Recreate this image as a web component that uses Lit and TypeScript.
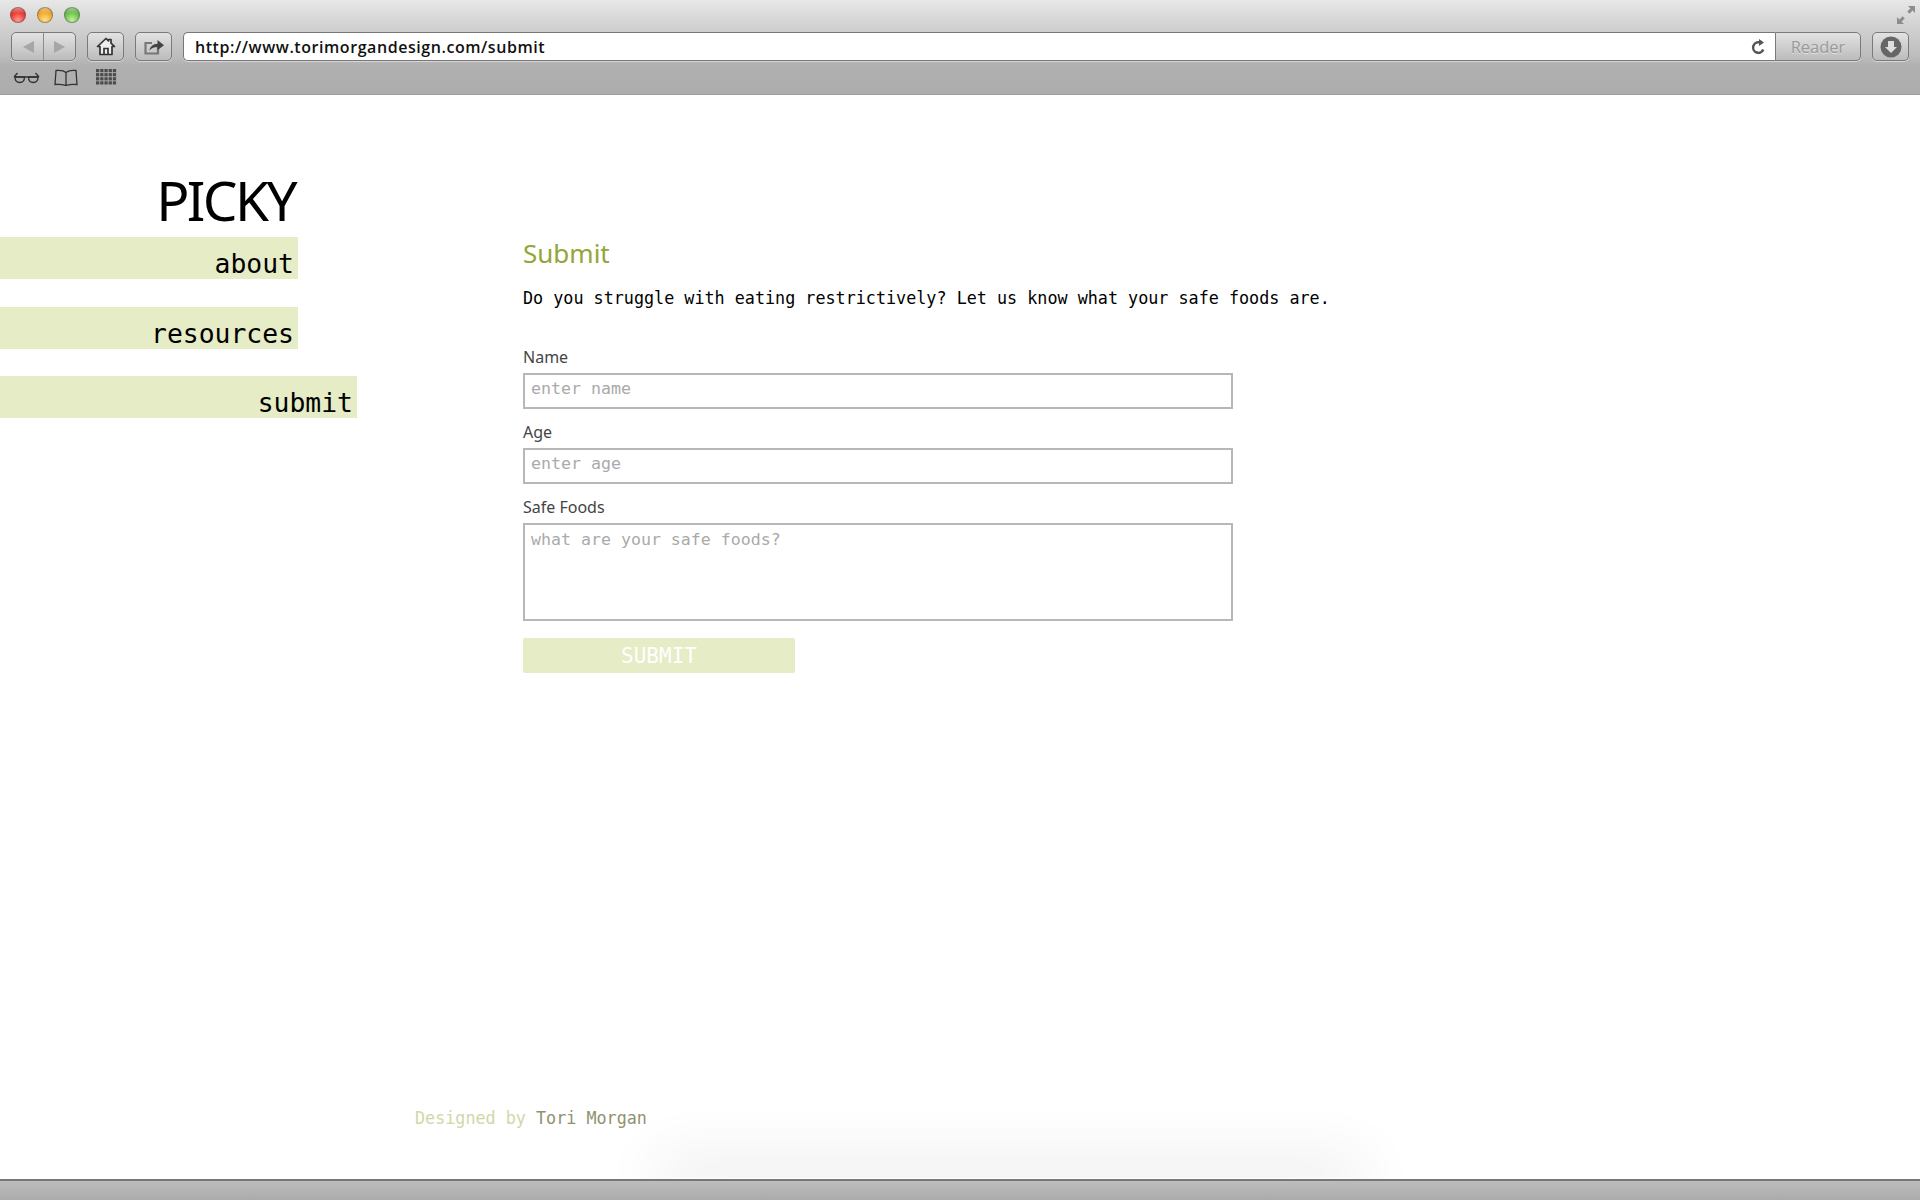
import { LitElement, html, css, svg, unsafeCSS } from "lit";
import { customElement } from "lit/decorators.js";

const MONO = unsafeCSS(`"DejaVu Sans Mono", "Liberation Mono", monospace`);

@customElement("browser-chrome")
class BrowserChrome extends LitElement {
  static styles = css`
    :host { display: block; height: 95px; position: relative; background: linear-gradient(#e8e8e8 0, #d6d6d6 20px, #bdbdbd 56px, #b0b0b0 66px, #adadad 94px); border-bottom: 1px solid #9f9f9f; box-sizing: border-box; }
    .title { height: 32px; display: flex; align-items: center; justify-content: space-between; padding: 0 4px 3px 10px; box-sizing: border-box; }
    .lights { display: flex; gap: 11px; }
    .light { width: 16px; height: 16px; border-radius: 50%; box-sizing: border-box; border: 1px solid rgba(90,90,90,.55); }
    .red { background: linear-gradient(rgba(255,255,255,.45), rgba(255,255,255,0) 40%), radial-gradient(circle at 50% 85%, #ff9a8e 0, #ec3b32 55%, #b5201c 100%); }
    .yellow { background: linear-gradient(rgba(255,255,255,.45), rgba(255,255,255,0) 40%), radial-gradient(circle at 50% 85%, #ffe08a 0, #f2a92c 55%, #b87a14 100%); }
    .green { background: linear-gradient(rgba(255,255,255,.45), rgba(255,255,255,0) 40%), radial-gradient(circle at 50% 85%, #c6f0a0 0, #6cc04a 55%, #3b8a2a 100%); }
    .tools { height: 29px; display: flex; align-items: stretch; padding: 0 11px; }
    .btn { box-sizing: border-box; border: 1px solid #7a7a7a; border-radius: 5px; background: linear-gradient(#e2e2e2, #bcbcbc); display: flex; align-items: center; justify-content: center; box-shadow: 0 1px 0 rgba(255,255,255,.45); }
    .nav { width: 65px; margin-right: 11px; }
    .nav span { flex: 1; display: flex; align-items: center; justify-content: center; height: 100%; }
    .nav span + span { border-left: 1px solid #8c8c8c; }
    .sq { width: 37px; margin-right: 11px; }
    .url { flex: 1; display: flex; align-items: center; box-sizing: border-box; background: #fff; border: 1px solid #777; border-right: 0; border-radius: 5px 0 0 5px; padding: 0 9px 0 11px; font: 600 16px "Open Sans", sans-serif; color: #111; box-shadow: 0 1px 0 rgba(255,255,255,.45); letter-spacing: .56px; }
    .url span { flex: 1; }
    .reader { width: 86px; border-radius: 0 5px 5px 0; font: 16.5px "Open Sans", sans-serif; color: #999; margin-right: 11px; text-shadow: 0 1px 0 rgba(255,255,255,.5); }
    .dl { margin: 0; }
    .marks { display: flex; align-items: center; height: 32px; padding-left: 13px; }
    .marks .glasses { margin-right: 14px; }
    .marks .book { margin-right: 18px; }
    svg { display: block; }
  `;
  render() {
    return html`
      <div class="title">
        <div class="lights">
          <div class="light red"></div><div class="light yellow"></div><div class="light green"></div>
        </div>
        <svg width="20" height="20" viewBox="0 0 20 20" fill="#8d8d8d">
          <path d="M12 1h7v7l-2.4-2.4-3.2 3.2-2.2-2.2 3.2-3.2zM1 19v-7l2.4 2.4 3.2-3.2 2.2 2.2-3.2 3.2L8 19z"/>
        </svg>
      </div>
      <div class="tools">
        <div class="btn nav">
          <span><svg width="14" height="14" viewBox="0 0 14 14"><path d="M13 1v12L2 7z" fill="#a6a6a6"/></svg></span>
          <span><svg width="14" height="14" viewBox="0 0 14 14"><path d="M1 1v12l11-6z" fill="#a6a6a6"/></svg></span>
        </div>
        <div class="btn sq">
          <svg width="20" height="19" viewBox="0 0 20 19"><path d="M10 1.5 1.5 9.5H4v8h12v-8h2.5L15 6.2V2.5h-2.5v1.4z" fill="#eee" stroke="#333" stroke-width="1.7" stroke-linejoin="round"/><path d="M8 17.5v-6h4v6" fill="none" stroke="#333" stroke-width="1.7"/></svg>
        </div>
        <div class="btn sq">
          <svg width="22" height="18" viewBox="0 0 22 18"><path d="M15 9v6.5H2.5V5H9" fill="none" stroke="#777" stroke-width="2.2"/><path d="M6.5 12.5c.6-4 3.5-6.6 8-6.8V2L21 7.2l-6.500 5V9c-3 0-5.600.8-8 3.500z" fill="#444"/></svg>
        </div>
        <div class="url">
          <span>http://www.torimorgandesign.com/submit</span>
          <svg width="15" height="16" viewBox="0 0 15 16"><path d="M12.3 10.5A5.3 5.3 0 1 1 8.500 3.300" fill="none" stroke="#555" stroke-width="2.500"/><path d="M8 0v7l5-3.500z" fill="#555"/></svg>
        </div>
        <div class="btn reader">Reader</div>
        <div class="btn sq dl">
          <svg width="22" height="22" viewBox="0 0 22 22"><circle cx="11" cy="11" r="10.5" fill="#666"/><path d="M8 5h6v6h3l-6 6-6-6h3z" fill="#ddd"/></svg>
        </div>
      </div>
      <div class="marks">
        <svg class="glasses" width="27" height="13" viewBox="0 0 27 13" fill="none" stroke="#333" stroke-width="1.3"><path d="M1 6 4.500 2M26 6 22.500 2M1 6h25"/><path d="M2 6h9.500c0 3.500-1.500 5.500-4.700 5.500S2 9.500 2 6zM15.500 6H25c0 3.500-1.500 5.500-4.800 5.500S15.500 9.500 15.500 6z"/></svg>
        <svg class="book" width="24" height="17" viewBox="0 0 24 17" fill="none" stroke="#333" stroke-width="1.3"><path d="M12 3.500C10 1.800 6 1 2 1.500L1 15.500c4-.5 8 0 11 1 3-1 7-1.500 11-1L22 1.500C18 1 14 1.800 12 3.500zM12 3.500v13"/></svg>
        <svg width="21" height="16" viewBox="0 0 21 16" fill="#4c4c4c">
          ${[0, 1, 2, 3].map((r) =>
            [0, 1, 2, 3, 4].map((c) => svg`<rect x=${c * 4.2} y=${r * 4.1} width="3.3" height="3.2"/>`)
          )}
        </svg>
      </div>
    `;
  }
}

@customElement("app-root")
class AppRoot extends LitElement {
  static styles = css`
    :host { display: flex; flex-direction: column; width: 1920px; height: 1200px; overflow: hidden; background: #fff; font-family: ${MONO}; position: relative; }
    .page { flex: 1; display: grid; grid-template-columns: 523px 1fr; min-height: 0; }
    aside { padding-top: 70px; display: flex; flex-direction: column; }
    .logo { margin: 0 0 3px; box-sizing: border-box; width: 297px; padding-right: 2px; text-align: right; font: 400 55px/69px "Noto Sans", sans-serif; letter-spacing: -2.6px; color: #000; }
    .side { display: flex; flex-direction: column; gap: 27.7px; }
    .side a { display: block; box-sizing: border-box; height: 42px; width: 298px; background: #e6ecc5; text-align: right; padding-right: 4px; color: #000; font-size: 26.4px; line-height: 54px; text-decoration: none; overflow: hidden; }
    .side a.wide { width: 357px; }
    main { padding-top: 139.5px; }
    h2 { margin: 0; font: 400 26px/36px "Noto Sans", sans-serif; color: #93a63a; }
    .lead { margin: 15.5px 0 0; font-size: 16.75px; line-height: 24px; color: #000; white-space: nowrap; }
    form { display: flex; flex-direction: column; margin-top: 36px; width: 710px; }
    label { font: 400 16px/22px "Noto Sans", sans-serif; color: #444; margin-bottom: 5px; }
    input, textarea { display: block; box-sizing: border-box; width: 100%; border: 2px solid #b7b7b7; background: #fff; padding: 0 6px; margin: 0 0 12px; font-size: 16.6px; font-family: inherit; outline: 0; border-radius: 0; color: #000; }
    input { height: 36px; padding-bottom: 5px; }
    textarea { height: 98px; padding-top: 5px; resize: none; margin-bottom: 17px; }
    ::placeholder { color: #aaa; opacity: 1; }
    button { width: 272px; height: 35px; border: 0; border-radius: 2px; background: #e6ecc5; color: #fff; font-family: inherit; font-size: 21px; padding: 0; }
    .foot { position: absolute; left: 415px; top: 1106px; font-size: 16.75px; line-height: 24px; color: #d0d8a8; white-space: nowrap; }
    .foot span { color: #8f9270; }
    .glow { position: absolute; left: 670px; width: 680px; top: 1178px; height: 6px; box-shadow: 0 -4px 60px 14px rgba(0,0,0,.09); }
    .status { height: 21px; flex: none; box-sizing: border-box; border-top: 2px solid #777; background: linear-gradient(#bdbdbd, #ababab); position: relative; }
  `;
  render() {
    return html`
      <browser-chrome></browser-chrome>
      <div class="page">
        <aside>
          <h1 class="logo">PICKY</h1>
          <nav class="side">
            <a href="#">about</a>
            <a href="#">resources</a>
            <a href="#" class="wide">submit</a>
          </nav>
        </aside>
        <main>
          <h2>Submit</h2>
          <p class="lead">Do you struggle with eating restrictively? Let us know what your safe foods are.</p>
          <form @submit=${(e: Event) => e.preventDefault()}>
            <label>Name</label>
            <input placeholder="enter name" />
            <label>Age</label>
            <input placeholder="enter age" />
            <label>Safe Foods</label>
            <textarea placeholder="what are your safe foods?"></textarea>
            <button>SUBMIT</button>
          </form>
        </main>
      </div>
      <div class="glow"></div>
      <div class="foot">Designed by <span>Tori Morgan</span></div>
      <div class="status"></div>
    `;
  }
}
